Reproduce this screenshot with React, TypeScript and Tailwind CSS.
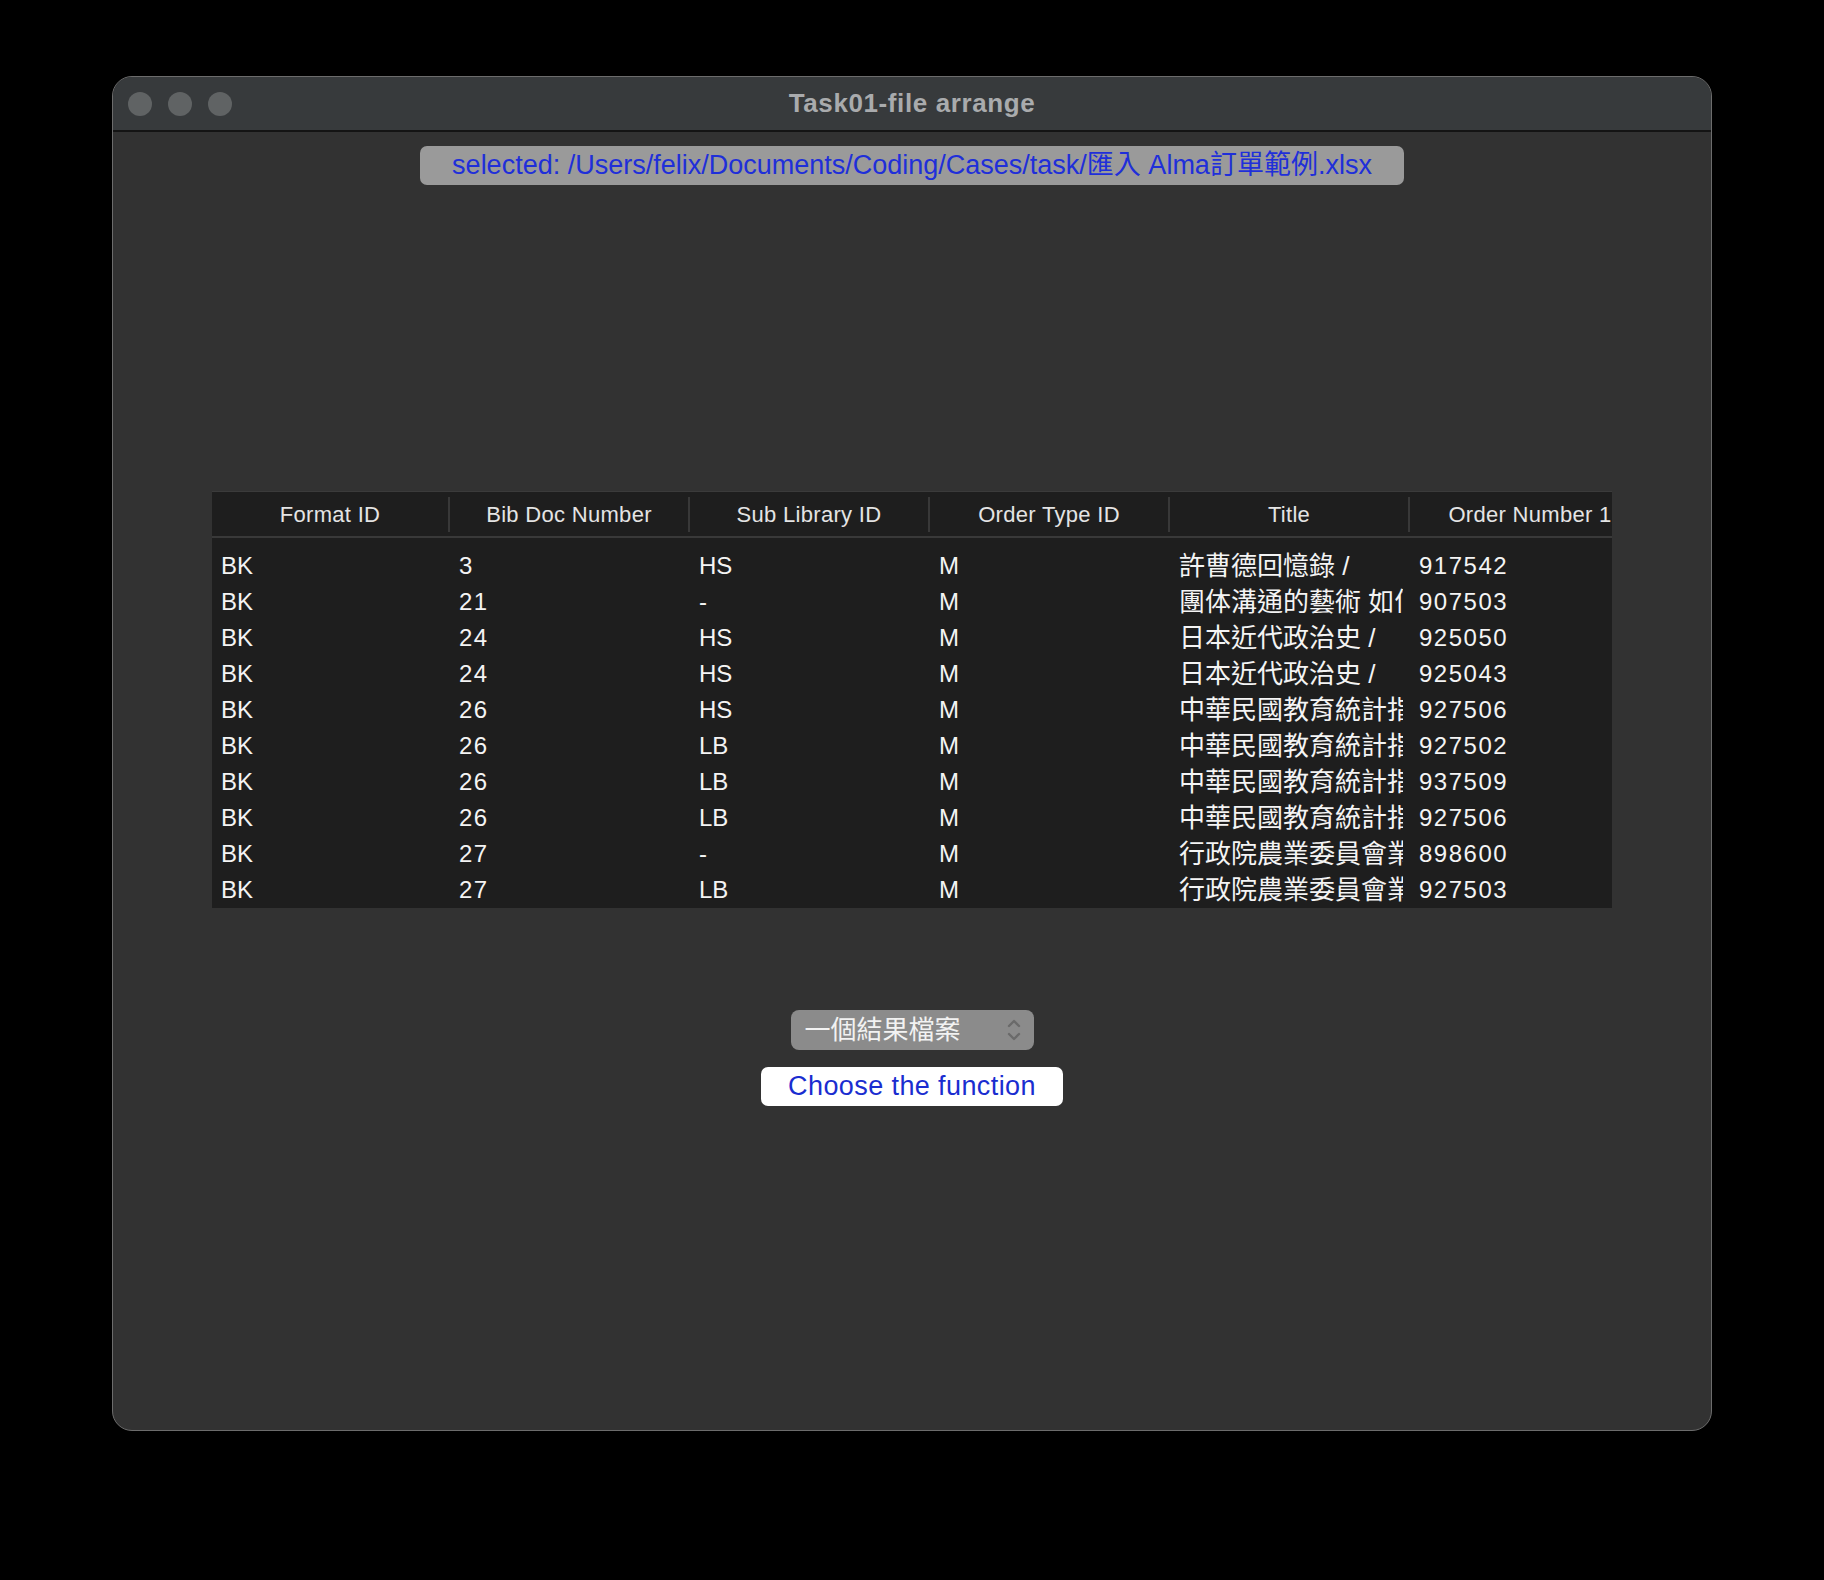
import React from "react";

const font = { fontFamily: '"Liberation Sans", "Noto Sans CJK TC", sans-serif' };

const headers = ["Format ID", "Bib Doc Number", "Sub Library ID", "Order Type ID", "Title", "Order Number 1"];

const rows: string[][] = [
  ["BK", "3", "HS", "M", "許曹德回憶錄 /", "917542"],
  ["BK", "21", "-", "M", "團体溝通的藝術 如何", "907503"],
  ["BK", "24", "HS", "M", "日本近代政治史 /", "925050"],
  ["BK", "24", "HS", "M", "日本近代政治史 /", "925043"],
  ["BK", "26", "HS", "M", "中華民國教育統計指標", "927506"],
  ["BK", "26", "LB", "M", "中華民國教育統計指標", "927502"],
  ["BK", "26", "LB", "M", "中華民國教育統計指標", "937509"],
  ["BK", "26", "LB", "M", "中華民國教育統計指標", "927506"],
  ["BK", "27", "-", "M", "行政院農業委員會業務", "898600"],
  ["BK", "27", "LB", "M", "行政院農業委員會業務", "927503"],
];

const cols = "grid grid-cols-[238px_240px_240px_240px_240px_240px]";

function Chevrons() {
  return (
    <svg width="16" height="26" viewBox="0 0 16 26" fill="none" stroke="#6a6a6a" strokeWidth="2.4" strokeLinecap="round" strokeLinejoin="round">
      <path d="M3 9 L8 4 L13 9" />
      <path d="M3 17 L8 22 L13 17" />
    </svg>
  );
}

function cellClass(ci: number, value: string) {
  if (ci === 4) return "text-[26px]";
  if (/^\d+$/.test(value)) return "text-[24px] tracking-[1.5px]";
  return "text-[24px]";
}

function DataTable() {
  return (
    <div className="w-[1400px] overflow-hidden bg-[#1e1e1e] border-t border-[#3b3b3b]">
      <div className={`${cols} h-[46px] items-center border-b-2 border-[#393939]`}>
        {headers.map((h, i) => (
          <div
            key={h}
            className={`h-[35px] flex items-center justify-center whitespace-nowrap text-[22px] tracking-[0.3px] text-[#e4e4e4] ${i < 5 ? "border-r-2 border-[#383838]" : ""}`}
          >
            {h}
          </div>
        ))}
      </div>
      <div className="pt-[10px]">
        {rows.map((r, ri) => (
          <div key={ri} className={`${cols} h-[36px] items-center`}>
            {r.map((c, ci) => (
              <div key={ci} className="pl-[9px] pr-[7px] min-w-0">
                <div className={`overflow-hidden whitespace-nowrap text-[#f4f4f4] leading-[36px] ${cellClass(ci, c)}`}>
                  {c}
                </div>
              </div>
            ))}
          </div>
        ))}
      </div>
    </div>
  );
}

export default function App() {
  return (
    <div className="w-[1824px] h-[1580px] bg-black pt-[76px] pl-[112px]" style={font}>
      <div className="w-[1600px] h-[1355px] rounded-[20px] overflow-hidden border border-[#6c6c6c] bg-[#323232] flex flex-col">
        <div className="relative h-[55px] shrink-0 bg-[#373a3c] border-b-2 border-[#141414] flex items-center">
          <div className="flex gap-4 pl-[15px]">
            <span className="w-6 h-6 rounded-full bg-[#606364]" />
            <span className="w-6 h-6 rounded-full bg-[#606364]" />
            <span className="w-6 h-6 rounded-full bg-[#606364]" />
          </div>
          <div className="absolute inset-0 flex items-center justify-center text-[26px] font-bold text-[#a9abad] tracking-[0.6px]">
            Task01-file arrange
          </div>
        </div>

        <div className="flex flex-col items-center pt-[14px]">
          <div className="w-[984px] h-[39px] rounded-[7px] bg-[#9a9a9a] flex items-center justify-center text-[27px] text-[#1f2fd9] whitespace-nowrap">
            selected: /Users/felix/Documents/Coding/Cases/task/匯入 Alma訂單範例.xlsx
          </div>

          <div className="mt-[306px]">
            <DataTable />
          </div>

          <div className="mt-[102px] w-[243px] h-[40px] rounded-[8px] bg-[#8b8b8b] flex items-center justify-between pl-[14px] pr-[12px]">
            <span className="text-[26px] text-[#f2f2f2] leading-none">一個結果檔案</span>
            <Chevrons />
          </div>

          <div className="mt-[17px] w-[302px] h-[39px] rounded-[7px] bg-white flex items-center justify-center text-[27px] tracking-[0.4px] text-[#1a2dd0]">
            Choose the function
          </div>
        </div>
      </div>
    </div>
  );
}
